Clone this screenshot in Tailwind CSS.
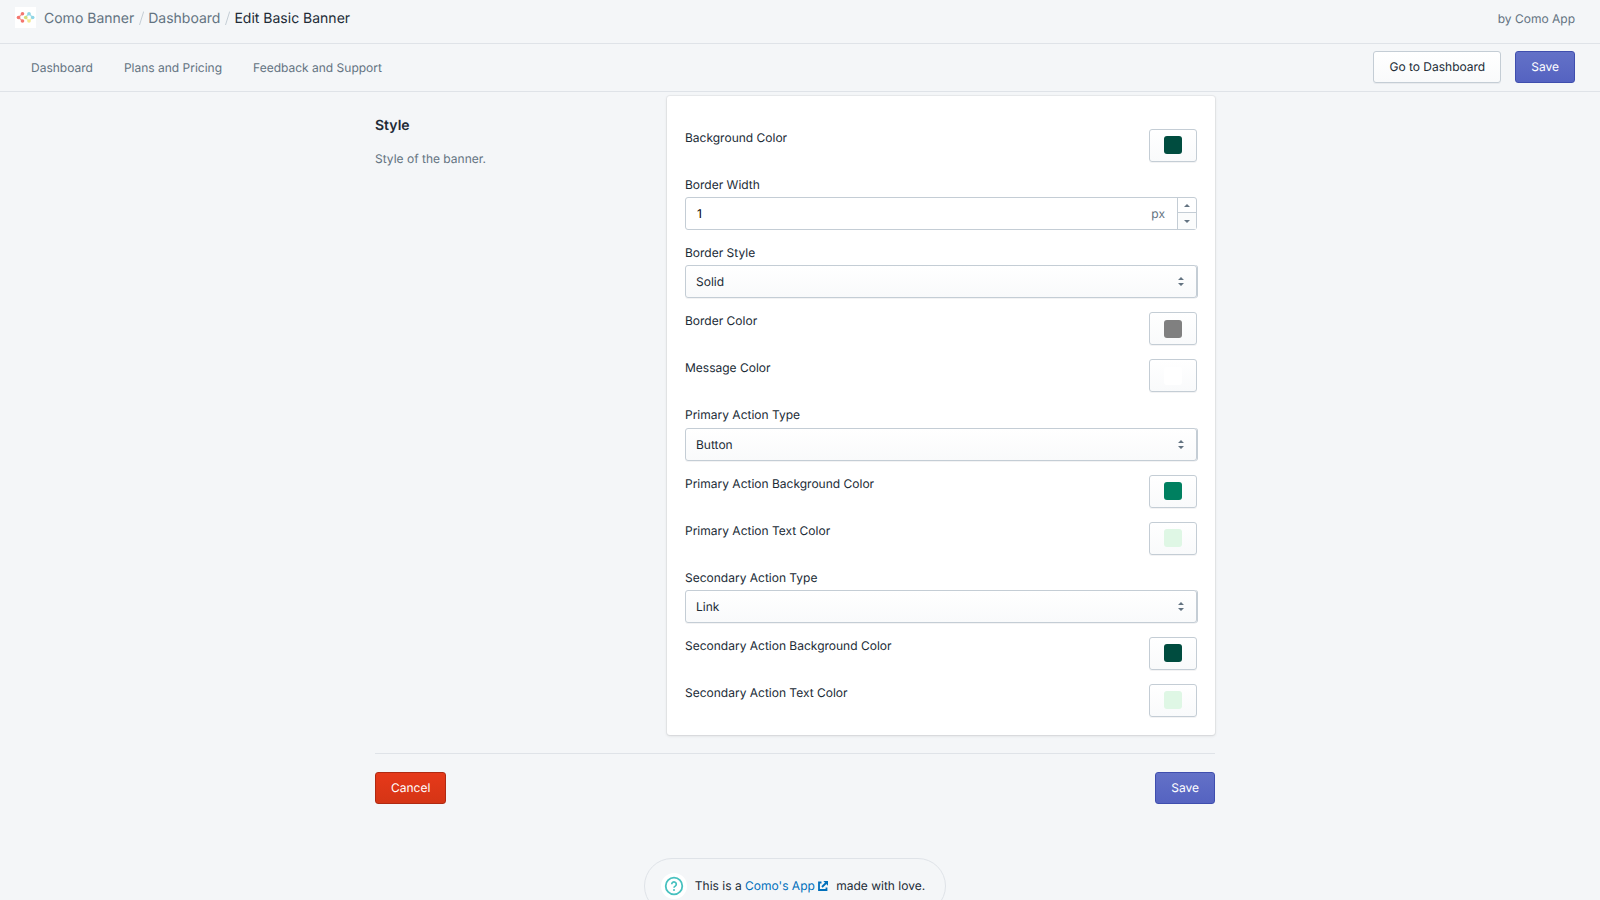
<!DOCTYPE html>
<html lang="en">
<head>
<meta charset="utf-8">
<meta name="viewport" content="width=device-width, initial-scale=1">
<title>Edit Basic Banner</title>
<script src="https://cdn.jsdelivr.net/npm/@tailwindcss/browser@4"></script>
</head>
<body class="flex h-screen flex-col overflow-hidden bg-[#f4f6f8] font-['Inter',sans-serif] text-xs leading-[18px] text-[#212b36] [&_*]:[text-rendering:geometricPrecision]">
<header class="flex h-11 shrink-0 items-start justify-between border-b border-[#dfe3e8] pt-[7px] pr-[25px] pl-[15px]">
  <nav aria-label="Breadcrumb" class="flex items-start text-sm leading-[23px] text-[#637381]">
    <svg class="mr-2 size-[21px]" viewBox="0 0 21 21" aria-hidden="true">
      <rect width="21" height="21" fill="#fff"/>
      <g stroke-width="1.3" fill="none">
        <path d="M7.5 6.5 3.5 10.5 7.5 14" stroke="#f4a09c"/>
        <path d="M10.5 10.5 14 6.5 17.5 10.5" stroke="#a9dfeb"/>
        <path d="M10.5 10.5 14 14 17.5 10.5" stroke="#f5eeb4"/>
      </g>
      <g fill="#f4766f"><circle cx="7.5" cy="6.7" r="1.8"/><circle cx="3.5" cy="10.5" r="1.8"/><circle cx="7.5" cy="14" r="1.8"/></g>
      <circle cx="10.7" cy="10.5" r="1.8" fill="#d3dd7b"/><circle cx="14" cy="6.7" r="1.8" fill="#8fd6e6"/><circle cx="17.7" cy="10.5" r="1.8" fill="#8fd6e6"/><circle cx="14" cy="14" r="1.8" fill="#f3e88f"/>
    </svg>
    <a href="#">Como Banner</a>
    <svg class="mt-1 mr-1 ml-[5px] h-[15px] w-[5px]" viewBox="0 0 5 15" aria-hidden="true"><path d="M4.7.5.5 14" stroke="#c4cdd5" fill="none"/></svg>
    <a href="#">Dashboard</a>
    <svg class="mt-1 mr-1 ml-[5px] h-[15px] w-[5px]" viewBox="0 0 5 15" aria-hidden="true"><path d="M4.7.5.5 14" stroke="#c4cdd5" fill="none"/></svg>
    <span class="text-[#212b36]" aria-current="page">Edit Basic Banner</span>
  </nav>
  <span class="leading-[23px] text-[#637381]">by Como App</span>
</header>
<div class="flex h-12 shrink-0 items-start justify-between border-b border-[#dfe3e8] pt-[7px] pr-[25px] pl-[31px]">
  <nav aria-label="Main" class="flex gap-[31px] leading-[34px] text-[#637381]">
    <a href="#">Dashboard</a>
    <a href="#">Plans and Pricing</a>
    <a href="#">Feedback and Support</a>
  </nav>
  <div class="flex gap-[14px]">
    <button type="button" class="h-8 rounded-[3px] border border-[#c4cdd5] bg-linear-to-b from-white to-[#f9fafb] px-[15px] shadow-[0_1px_0_rgba(22,29,37,0.05)]">Go to Dashboard</button>
    <button type="submit" form="style-form" class="h-8 rounded-[3px] border border-[#3f4eae] bg-linear-to-b from-[#6371c7] to-[#5563c1] px-[15px] text-white">Save</button>
  </div>
</div>
<main class="min-h-0 flex-1 overflow-hidden pr-[10px]">
  <form id="style-form" class="mx-auto max-w-[840px] pt-1">
    <div class="grid grid-cols-[292fr_548fr]">
      <section class="pt-[19px]">
        <h2 class="text-sm leading-[22px] font-semibold">Style</h2>
        <p class="mt-[13px] text-[#637381]">Style of the banner.</p>
      </section>
      <div class="flex flex-col gap-[14px] rounded-[3px] bg-white px-[18px] pt-[33px] pb-[18px] shadow-[0_0_0_1px_rgba(63,63,68,0.05),0_1px_3px_rgba(63,63,68,0.15)]">
        <div class="flex justify-between">
          <span id="l1">Background Color</span>
          <button type="button" aria-labelledby="l1" class="flex h-[33px] w-12 items-center justify-center rounded-[3px] border border-[#c4cdd5] bg-linear-to-b from-white to-[#f9fafb] pb-px shadow-[0_1px_0_rgba(22,29,37,0.05)]"><span class="size-[18px] rounded-[3px] bg-[#004c3f]"></span></button>
        </div>
        <div>
          <label for="bw">Border Width</label>
          <div class="mt-[3px] flex h-[33px] rounded-[3px] border border-[#c4cdd5] bg-white">
            <input id="bw" type="number" value="1" class="min-w-0 flex-1 appearance-none px-[11px] text-black outline-none [appearance:textfield] [&::-webkit-inner-spin-button]:appearance-none">
            <span class="self-center pr-3 text-[#637381]">px</span>
            <div class="flex w-[19px] flex-col border-l border-[#c4cdd5]">
              <button type="button" aria-label="Increase" class="flex h-[15px] items-center justify-center border-b border-[#c4cdd5]"><svg class="h-[3px] w-[6px]" viewBox="0 0 6 3"><path d="M0 3 3 0 6 3Z" fill="#637381"/></svg></button>
              <button type="button" aria-label="Decrease" class="flex flex-1 items-center justify-center bg-[#fbfcfc]"><svg class="h-[3px] w-[6px]" viewBox="0 0 6 3"><path d="M0 0 3 3 6 0Z" fill="#637381"/></svg></button>
            </div>
          </div>
        </div>
        <div>
          <label for="bs">Border Style</label>
          <div class="mt-[3px] grid items-center">
            <select id="bs" class="col-start-1 row-start-1 h-[33px] w-full appearance-none rounded-[3px] border border-[#c4cdd5] bg-linear-to-b from-white to-[#f9fafb] px-[10px] shadow-[1px_0_0_#c4cdd5,0_1px_0_rgba(22,29,37,0.05)]"><option>Solid</option></select>
            <svg class="pointer-events-none col-start-1 row-start-1 mr-[13px] h-[9px] w-[6px] justify-self-end" viewBox="0 0 6 9"><path d="M0 3 3 0 6 3ZM0 6 3 9 6 6Z" fill="#637381"/></svg>
          </div>
        </div>
        <div class="flex justify-between">
          <span id="l2">Border Color</span>
          <button type="button" aria-labelledby="l2" class="flex h-[33px] w-12 items-center justify-center rounded-[3px] border border-[#c4cdd5] bg-linear-to-b from-white to-[#f9fafb] shadow-[0_1px_0_rgba(22,29,37,0.05)]"><span class="size-[18px] rounded-[3px] bg-[#808080]"></span></button>
        </div>
        <div class="flex justify-between">
          <span id="l3">Message Color</span>
          <button type="button" aria-labelledby="l3" class="flex h-[33px] w-12 items-center justify-center rounded-[3px] border border-[#c4cdd5] bg-linear-to-b from-white to-[#f9fafb] shadow-[0_1px_0_rgba(22,29,37,0.05)]"><span class="size-[18px] rounded-[3px] bg-white"></span></button>
        </div>
        <div>
          <label for="pt">Primary Action Type</label>
          <div class="mt-1 grid items-center">
            <select id="pt" class="col-start-1 row-start-1 h-[33px] w-full appearance-none rounded-[3px] border border-[#c4cdd5] bg-linear-to-b from-white to-[#f9fafb] px-[10px] shadow-[1px_0_0_#c4cdd5,0_1px_0_rgba(22,29,37,0.05)]"><option>Button</option></select>
            <svg class="pointer-events-none col-start-1 row-start-1 mr-[13px] h-[9px] w-[6px] justify-self-end" viewBox="0 0 6 9"><path d="M0 3 3 0 6 3ZM0 6 3 9 6 6Z" fill="#637381"/></svg>
          </div>
        </div>
        <div class="flex justify-between">
          <span id="l4">Primary Action Background Color</span>
          <button type="button" aria-labelledby="l4" class="flex h-[33px] w-12 items-center justify-center rounded-[3px] border border-[#c4cdd5] bg-linear-to-b from-white to-[#f9fafb] pb-px shadow-[0_1px_0_rgba(22,29,37,0.05)]"><span class="size-[18px] rounded-[3px] bg-[#008060]"></span></button>
        </div>
        <div class="flex justify-between">
          <span id="l5">Primary Action Text Color</span>
          <button type="button" aria-labelledby="l5" class="flex h-[33px] w-12 items-center justify-center rounded-[3px] border border-[#c4cdd5] bg-linear-to-b from-white to-[#f9fafb] pb-px shadow-[0_1px_0_rgba(22,29,37,0.05)]"><span class="size-[18px] rounded-[3px] bg-[#dff7e5]"></span></button>
        </div>
        <div>
          <label for="st">Secondary Action Type</label>
          <div class="mt-[3px] grid items-center">
            <select id="st" class="col-start-1 row-start-1 h-[33px] w-full appearance-none rounded-[3px] border border-[#c4cdd5] bg-linear-to-b from-white to-[#f9fafb] px-[10px] shadow-[1px_0_0_#c4cdd5,0_1px_0_rgba(22,29,37,0.05)]"><option>Link</option></select>
            <svg class="pointer-events-none col-start-1 row-start-1 mr-[13px] h-[9px] w-[6px] justify-self-end" viewBox="0 0 6 9"><path d="M0 3 3 0 6 3ZM0 6 3 9 6 6Z" fill="#637381"/></svg>
          </div>
        </div>
        <div class="flex justify-between">
          <span id="l6">Secondary Action Background Color</span>
          <button type="button" aria-labelledby="l6" class="flex h-[33px] w-12 items-center justify-center rounded-[3px] border border-[#c4cdd5] bg-linear-to-b from-white to-[#f9fafb] pb-px shadow-[0_1px_0_rgba(22,29,37,0.05)]"><span class="size-[18px] rounded-[3px] bg-[#004c3f]"></span></button>
        </div>
        <div class="flex justify-between">
          <span id="l7">Secondary Action Text Color</span>
          <button type="button" aria-labelledby="l7" class="flex h-[33px] w-12 items-center justify-center rounded-[3px] border border-[#c4cdd5] bg-linear-to-b from-white to-[#f9fafb] pb-px shadow-[0_1px_0_rgba(22,29,37,0.05)]"><span class="size-[18px] rounded-[3px] bg-[#dff7e5]"></span></button>
        </div>
      </div>
    </div>
    <div class="mt-[18px] flex justify-between border-t border-[#dfe3e8] pt-[18px]">
      <button type="button" class="h-8 rounded-[3px] border border-[#b02a12] bg-linear-to-b from-[#e6391a] to-[#d53515] px-[15px] text-white">Cancel</button>
      <button type="submit" class="h-8 rounded-[3px] border border-[#3f4eae] bg-linear-to-b from-[#6371c7] to-[#5563c1] px-[15px] text-white">Save</button>
    </div>
  </form>
  <footer class="mt-[54px] flex justify-center">
    <div class="flex h-[56px] items-center rounded-full border border-[#dfe3e8] pr-5 pl-4">
      <svg class="mr-2 size-[26px]" viewBox="0 0 26 26" fill="none" aria-hidden="true">
        <circle cx="13" cy="13" r="13" fill="#fff"/>
        <circle cx="13" cy="13" r="8.3" stroke="#47c1bf" stroke-width="1.8"/>
        <path d="M10.7 11.2a2.3 2.3 0 1 1 3.6 1.9c-.8.5-1.3.8-1.3 1.6" stroke="#47c1bf" stroke-width="1.7"/>
        <circle cx="13" cy="17.1" r="1" fill="#47c1bf"/>
      </svg>
      <p>This is a <a href="#" class="text-[#006fbb]">Como's App <svg class="inline size-[10px] align-[-1px]" viewBox="0 0 10 10" fill="none" aria-hidden="true"><path d="M3.5 1.5H1v7.5h7.5V6.5M4 6 8 2" stroke="#006fbb" stroke-width="1.8"/><path d="M5.3 0H10v4.7Z" fill="#006fbb"/></svg></a><span class="ml-2">made with love.</span></p>
    </div>
  </footer>
</main>
</body>
</html>
